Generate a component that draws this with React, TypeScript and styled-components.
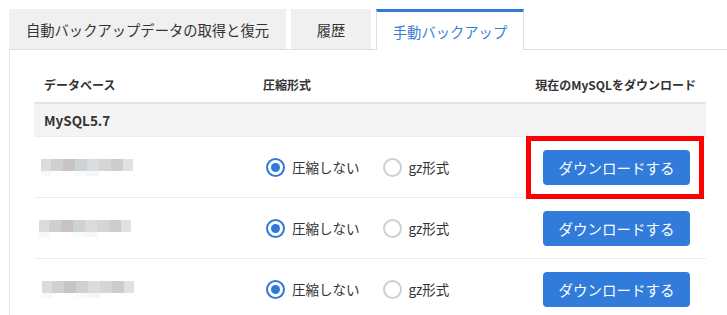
import React, { useState } from "react";
import styled, { createGlobalStyle } from "styled-components";

const GlobalStyle = createGlobalStyle`
  html, body {
    margin: 0;
    padding: 0;
    background: #fff;
    overflow: hidden;
  }
  body {
    font-family: "Noto Sans CJK JP", "Noto Sans", "Liberation Sans", sans-serif;
    color: #333;
  }
`;

const Page = styled.div`
  padding: 9px 0 0 9px;
  width: 718px;
`;

const TabBar = styled.div`
  display: flex;
  gap: 5px;
  border-bottom: 1px solid #dedede;
  height: 40px;
`;

const Tab = styled.div<{ $active: boolean; $width: number }>`
  box-sizing: border-box;
  width: ${(p) => p.$width}px;
  height: ${(p) => (p.$active ? 41 : 40)}px;
  display: flex;
  align-items: center;
  justify-content: center;
  font-size: 14.3px;
  cursor: pointer;
  background: ${(p) => (p.$active ? "#fff" : "#f0f0f0")};
  color: ${(p) => (p.$active ? "#3a7bd5" : "#333")};
  border: ${(p) => (p.$active ? "1px solid #dedede" : "none")};
  border-top: ${(p) => (p.$active ? "3px solid #3179db" : "none")};
  border-bottom: none;
`;

const Panel = styled.div`
  border-left: 1px solid #e6e6e6;
  padding: 17px 12px 0 24px;
  height: 270px;
`;

const Table = styled.div`
  width: 672px;
`;

const Row = styled.div<{ $kind: "head" | "group" | "body" }>`
  box-sizing: border-box;
  display: grid;
  grid-template-columns: 219px 1fr auto;
  align-items: center;
  height: ${(p) => (p.$kind === "head" ? 37 : p.$kind === "group" ? 32 : 61)}px;
  background: ${(p) => (p.$kind === "group" ? "#f4f4f4" : "transparent")};
  border-bottom: ${(p) => (p.$kind === "head" ? "2px solid #e4e4e4" : "none")};
  border-top: ${(p) => (p.$kind === "body" ? "1px solid #ededed" : "none")};
`;

const HeadCell = styled.div<{ $right?: boolean }>`
  font-size: 12px;
  font-weight: 700;
  color: #333;
  padding: 0 10px;
  text-align: ${(p) => (p.$right ? "right" : "left")};
`;

const GroupTitle = styled.div`
  grid-column: 1 / -1;
  padding: 0 10px;
  font-size: 13.5px;
  font-weight: 700;
  color: #333;
`;

const Mosaic = styled.div<{ $shift: number }>`
  display: flex;
  flex-direction: column;
  margin-left: ${(p) => 7 + p.$shift}px;
  padding-top: 1px;
`;

const MosaicLine = styled.div`
  display: flex;
`;

const Block = styled.div<{ $c: string; $w: number; $h: number }>`
  width: ${(p) => p.$w}px;
  height: ${(p) => p.$h}px;
  background: ${(p) => p.$c};
`;

const RadioGroup = styled.div`
  display: flex;
  align-items: center;
  padding-left: 13px;
`;

const RadioOption = styled.label`
  display: flex;
  align-items: center;
  gap: 7px;
  font-size: 13.5px;
  color: #333;
  cursor: pointer;
  margin-right: 23px;
`;

const RadioCircle = styled.span<{ $checked: boolean }>`
  box-sizing: border-box;
  width: 19px;
  height: 19px;
  border-radius: 50%;
  border: 2px solid ${(p) => (p.$checked ? "#3179d9" : "#cfcfcf")};
  display: flex;
  align-items: center;
  justify-content: center;
  background: #fff;

  &::after {
    content: "";
    width: 9px;
    height: 9px;
    border-radius: 50%;
    background: ${(p) => (p.$checked ? "#3179d9" : "transparent")};
  }
`;

const ButtonCell = styled.div`
  padding-right: 16px;
  display: flex;
  justify-content: flex-end;
`;

const ButtonWrap = styled.div`
  position: relative;
`;

const DownloadButton = styled.button`
  width: 147px;
  height: 35px;
  border: none;
  border-radius: 4px;
  background: #317bdb;
  color: #fff;
  font-family: inherit;
  font-size: 14.5px;
  cursor: pointer;
  padding: 0;
`;

const Highlight = styled.div`
  position: absolute;
  top: -14px;
  bottom: -14px;
  left: -17px;
  right: -14px;
  border: 5px solid #ff0000;
  pointer-events: none;
`;

const topColors = ["#dcdcdc", "#d0d0d0", "#c9c4c4", "#cdd2d6", "#dcdcdc", "#d5d5d5", "#cbced1", "#e0e1e0"];
const topWidths = [10, 12, 12, 12, 12, 12, 12, 10];
const bottomColors = ["#f8f8f8", "#fff", "#fff", "#f9fafa", "#f4f6f9", "#fff", "#fff", "#fff"];

const tabs = [
  { label: "自動バックアップデータの取得と復元", width: 277 },
  { label: "履歴", width: 80 },
  { label: "手動バックアップ", width: 148 },
];

const databases = [
  { id: 1, shift: 0, highlighted: true },
  { id: 2, shift: -2, highlighted: false },
  { id: 3, shift: 1, highlighted: false },
];

const BlurredName = ({ shift }: { shift: number }) => (
  <Mosaic $shift={shift}>
    <MosaicLine>
      {topColors.map((c, i) => (
        <Block key={i} $c={c} $w={topWidths[i]} $h={12} />
      ))}
    </MosaicLine>
    <MosaicLine>
      {bottomColors.map((c, i) => (
        <Block key={i} $c={c} $w={topWidths[i]} $h={5} />
      ))}
    </MosaicLine>
  </Mosaic>
);

export default function App() {
  const [activeTab, setActiveTab] = useState(2);
  const [formats, setFormats] = useState<Record<number, string>>({ 1: "none", 2: "none", 3: "none" });

  return (
    <>
      <GlobalStyle />
      <Page>
        <TabBar>
          {tabs.map((tab, index) => (
            <Tab key={tab.label} $active={index === activeTab} $width={tab.width} onClick={() => setActiveTab(index)}>
              {tab.label}
            </Tab>
          ))}
        </TabBar>
        <Panel>
          <Table>
            <Row $kind="head">
              <HeadCell>データベース</HeadCell>
              <HeadCell>圧縮形式</HeadCell>
              <HeadCell $right>現在のMySQLをダウンロード</HeadCell>
            </Row>
            <Row $kind="group">
              <GroupTitle>MySQL5.7</GroupTitle>
            </Row>
            {databases.map((db) => (
              <Row $kind="body" key={db.id}>
                <BlurredName shift={db.shift} />
                <RadioGroup>
                  <RadioOption onClick={() => setFormats({ ...formats, [db.id]: "none" })}>
                    <RadioCircle $checked={formats[db.id] === "none"} />
                    圧縮しない
                  </RadioOption>
                  <RadioOption onClick={() => setFormats({ ...formats, [db.id]: "gz" })}>
                    <RadioCircle $checked={formats[db.id] === "gz"} />
                    gz形式
                  </RadioOption>
                </RadioGroup>
                <ButtonCell>
                  <ButtonWrap>
                    <DownloadButton>ダウンロードする</DownloadButton>
                    {db.highlighted && <Highlight />}
                  </ButtonWrap>
                </ButtonCell>
              </Row>
            ))}
          </Table>
        </Panel>
      </Page>
    </>
  );
}
